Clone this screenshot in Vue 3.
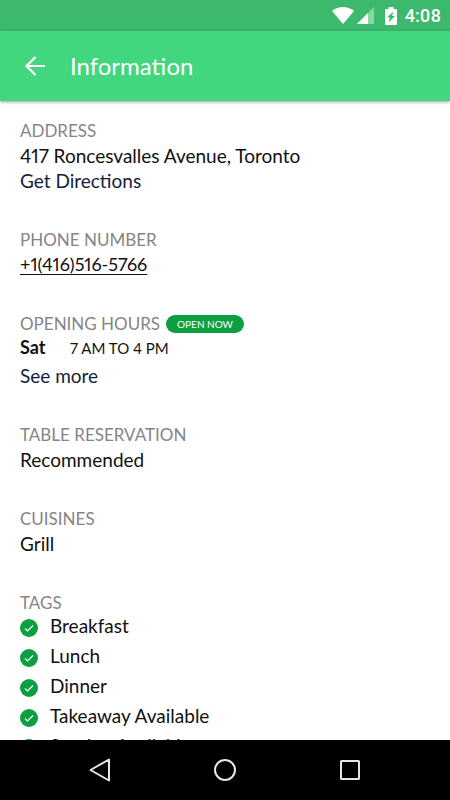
<script setup>
const tags = ['Breakfast', 'Lunch', 'Dinner', 'Takeaway Available', 'Seating Available']
</script>

<template>
  <div class="screen">
    <div class="status">
      <svg class="wifi" viewBox="0 0 22 17" aria-hidden="true">
        <path d="M0 4C6-1.300 16-1.300 22 4L11 17z" fill="#fff" />
      </svg>
      <svg class="signal" viewBox="0 0 17 17" aria-hidden="true">
        <path d="M17 0V17H0z" fill="#fff" opacity=".4" />
        <path d="M11 6V17H0z" fill="#fff" />
      </svg>
      <svg class="battery" viewBox="0 0 12 18" aria-hidden="true">
        <path d="M3.500 0h5v2H11q1 0 1 1v14q0 1-1 1H1q-1 0-1-1V3q0-1 1-1h2.500z" fill="#fff" />
        <path d="M8.500 4.500 2 10.500h3L3.500 15.500l6.500-6.500h-3z" fill="#3cb96c" />
      </svg>
      <span class="clock">4:08</span>
    </div>
    <header class="bar">
      <button class="back" type="button" aria-label="Back">
        <svg viewBox="0 0 22 20" aria-hidden="true">
          <path d="M21 10H2.500M11.500 1 2.500 10l9 9" fill="none" stroke="#fff" stroke-width="2.200" />
        </svg>
      </button>
      <h1>Information</h1>
    </header>
    <main class="content">
      <section>
        <h2>ADDRESS</h2>
        <p>417 Roncesvalles Avenue, Toronto</p>
        <a class="action" href="#directions">Get Directions</a>
      </section>
      <section>
        <h2>PHONE NUMBER</h2>
        <a class="phone" href="tel:+14165165766">+1(416)516-5766</a>
      </section>
      <section>
        <div class="heading">
          <h2>OPENING HOURS</h2>
          <span class="badge">OPEN NOW</span>
        </div>
        <div class="hours">
          <strong>Sat</strong>
          <span>7 AM TO 4 PM</span>
        </div>
        <a class="action" href="#hours">See more</a>
      </section>
      <section>
        <h2>TABLE RESERVATION</h2>
        <p>Recommended</p>
      </section>
      <section>
        <h2>CUISINES</h2>
        <p>Grill</p>
      </section>
      <section>
        <h2>TAGS</h2>
        <ul>
          <li v-for="tag in tags" :key="tag">
            <svg viewBox="0 0 18 18" aria-hidden="true">
              <circle cx="9" cy="9" r="9" fill="#0c9f42" />
              <path d="M5 9.500l2.500 2.500L13 6.500" fill="none" stroke="#fff" stroke-width="1.100" />
            </svg>
            <span>{{ tag }}</span>
          </li>
        </ul>
      </section>
    </main>
    <nav class="nav" aria-label="System">
      <button type="button" aria-label="Back">
        <svg viewBox="0 0 24 24"><path d="M21 1.500v21L2.500 12z" /></svg>
      </button>
      <button type="button" aria-label="Home">
        <svg viewBox="0 0 24 24"><circle cx="12" cy="12" r="10" /></svg>
      </button>
      <button type="button" aria-label="Recent apps">
        <svg viewBox="0 0 24 24"><rect x="3" y="3" width="18" height="18" rx="0.500" /></svg>
      </button>
    </nav>
  </div>
</template>

<style>
body {
  margin: 0;
}
</style>

<style scoped>
.screen {
  display: flex;
  flex-direction: column;
  height: 100vh;
  overflow: hidden;
  background: #fff;
  color: #111;
  font-family: Lato, "Liberation Sans", sans-serif;
  font-size: 19px;
  font-variant-numeric: proportional-nums;
  line-height: 25px;
}
.status {
  display: flex;
  flex: none;
  align-items: center;
  justify-content: flex-end;
  height: 31px;
  padding-right: 9px;
  background: #3cb96c;
  color: #fff;
}
.wifi {
  width: 22px;
  height: 17px;
}
.signal {
  width: 17px;
  height: 17px;
  margin-left: 3px;
}
.battery {
  width: 12px;
  height: 18px;
  margin-left: 11px;
}
.clock {
  margin-left: 8px;
  font-family: Roboto, sans-serif;
  font-size: 18px;
  font-weight: 500;
}
.bar {
  display: flex;
  flex: none;
  align-items: center;
  gap: 24px;
  height: 70px;
  padding: 0 24px;
  background: #42d67f;
  box-shadow: 0 1px 3px rgba(0, 0, 0, 0.4);
  color: #fff;
}
button {
  display: flex;
  padding: 0;
  border: 0;
  background: none;
}
.back svg {
  width: 22px;
  height: 20px;
}
h1 {
  margin: 0;
  font-size: 24px;
  font-weight: 400;
  line-height: 32px;
}
.content {
  display: flex;
  flex: 1;
  flex-direction: column;
  gap: 35px;
  min-height: 0;
  padding: 18px 20px 0;
  overflow: hidden;
}
section {
  display: flex;
  flex: none;
  flex-direction: column;
  align-items: flex-start;
}
h2 {
  margin: 0;
  color: #858585;
  font-size: 17px;
  font-weight: 400;
  line-height: 24px;
}
p {
  margin: 0;
}
.action {
  color: #14213a;
  text-decoration: none;
}
.phone {
  color: #111;
  font-size: 18px;
  text-decoration: underline;
  text-decoration-thickness: 1px;
  text-underline-offset: 3px;
}
.heading {
  display: flex;
  align-items: center;
  gap: 6px;
}
.badge {
  padding: 0 11px;
  border-radius: 9px;
  background: #0c9f42;
  color: #fff;
  font-size: 10px;
  line-height: 18px;
}
.hours {
  display: flex;
  align-items: baseline;
  margin-bottom: 4px;
  line-height: 22px;
}
.hours strong {
  width: 50px;
  font-size: 18px;
}
.hours span {
  font-size: 15px;
}
ul {
  display: flex;
  flex-direction: column;
  gap: 8px;
  margin: 0;
  padding: 0;
  line-height: 22px;
  list-style: none;
}
li {
  display: flex;
  align-items: flex-end;
  gap: 12px;
}
li svg {
  width: 18px;
  height: 18px;
}
.nav {
  display: flex;
  flex: none;
  align-items: center;
  height: 60px;
  padding: 0 38px;
  background: #000;
}
.nav button {
  flex: 1;
  justify-content: center;
}
.nav svg {
  width: 24px;
  height: 24px;
  fill: none;
  stroke: #e6e6e6;
  stroke-width: 2;
  stroke-linejoin: round;
}
</style>
